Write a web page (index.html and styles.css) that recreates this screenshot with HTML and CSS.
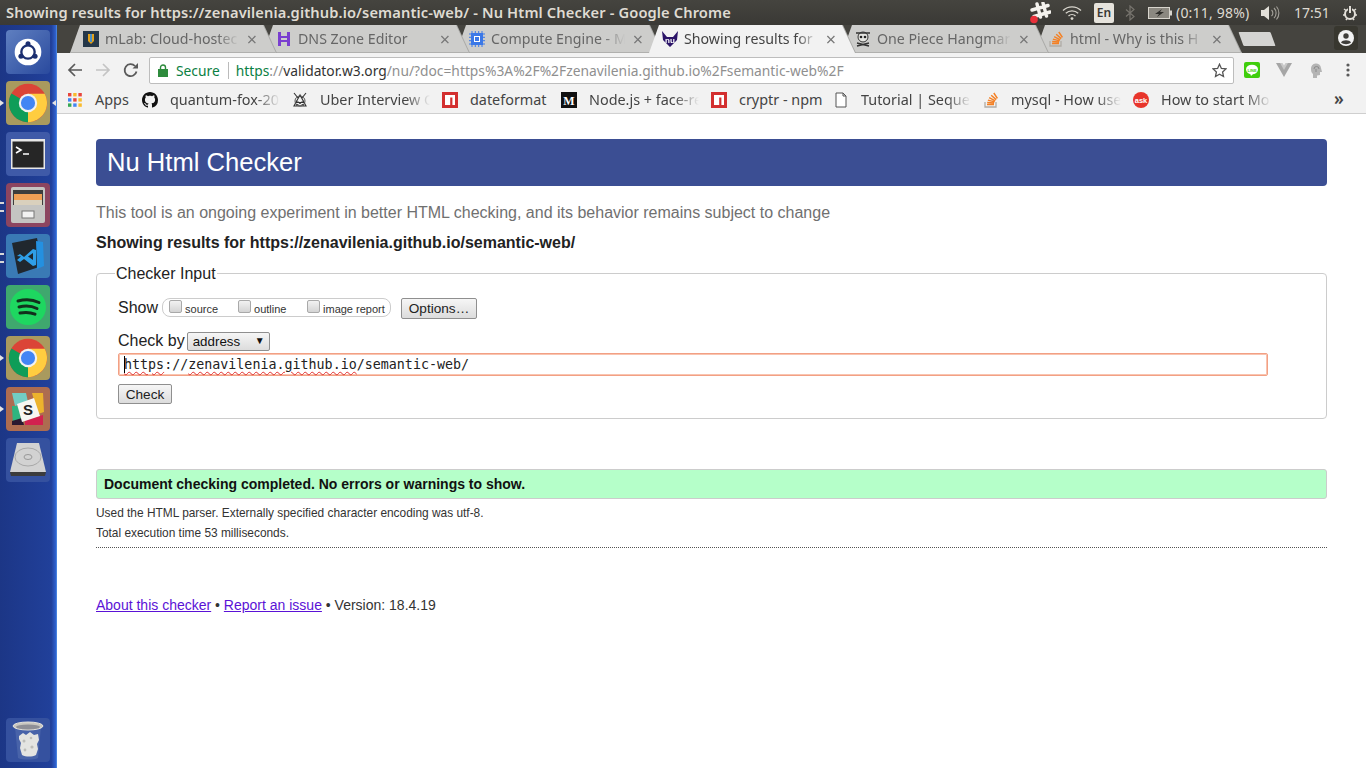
FILE: index.html
```html
<!DOCTYPE html>
<html lang="en">
<head>
<meta charset="utf-8">
<title>Showing results for https://zenavilenia.github.io/semantic-web/ - Nu Html Checker</title>
<link rel="stylesheet" href="styles.css">
</head>
<body>
<svg class="defs" width="0" height="0" aria-hidden="true">
  <symbol id="chrome" viewBox="0 0 48 48">
    <circle cx="24" cy="24" r="23" fill="#db4437"/>
    <path d="M24 24 L4.1 12.5 A23 23 0 0 0 24 47 Z" fill="#0f9d58"/>
    <path d="M24 13 H44 A23 23 0 0 1 24 47 L24 24 Z" fill="#ffcd40"/>
    <circle cx="24" cy="24" r="11" fill="#f1f1f1"/>
    <circle cx="24" cy="24" r="8.5" fill="#4285f4"/>
  </symbol>
  <symbol id="so" viewBox="0 0 16 16">
    <path d="M2 10v5h11v-5" fill="none" stroke="#b0aca6" stroke-width="1.3"/>
    <path d="M4 12.6h7M4.2 10.4l6.9.7M4.9 8.1l6.7 1.8M6.2 5.6l6 3.2M8.2 3.2l5 4.4M10.8 1l3.6 5.3" fill="none" stroke="#f48024" stroke-width="1.5"/>
  </symbol>
  <symbol id="npm" viewBox="0 0 16 16">
    <rect width="16" height="16" fill="#d32f2f"/>
    <path d="M3 3h10v10h-2.6V5.6H8.2V13H3z" fill="#fff"/>
  </symbol>
</svg>

<header class="topbar">
  <div class="win-title">Showing results for https://zenavilenia.github.io/semantic-web/ - Nu Html Checker - Google Chrome</div>
  <div class="indicators">
    <svg class="ind-slack" width="22" height="22" viewBox="0 0 22 22">
      <path d="M8 2l3.500 13M14 1l3.500 13M3 8l16-4.500M5 14.500l16-4.500" fill="none" stroke="#f4f2ee" stroke-width="3.400" stroke-linecap="round"/>
      <circle cx="5" cy="17.500" r="3.800" fill="#e8303a"/>
    </svg>
    <svg class="ind-wifi" width="20" height="16" viewBox="0 0 20 16">
      <path d="M1 5.500a13 13 0 0 1 18 0M3.800 8.300a9 9 0 0 1 12.400 0M6.500 11a5 5 0 0 1 7 0" fill="none" stroke="#d8d5cd" stroke-width="1.300"/>
      <circle cx="10" cy="13.600" r="1.400" fill="#d8d5cd"/>
    </svg>
    <span class="ind-lang">En</span>
    <svg class="ind-bt" width="10" height="16" viewBox="0 0 10 16">
      <path d="M1 4.500l8 7-4 3.500V1l4 3.500-8 7" fill="none" stroke="#77746e" stroke-width="1.200"/>
    </svg>
    <svg class="ind-bat" width="24" height="12" viewBox="0 0 24 12">
      <rect x=".5" y=".5" width="21" height="11" fill="#8b8880" stroke="#d8d5cd"/>
      <rect x="22" y="3.500" width="2" height="5" fill="#d8d5cd"/>
      <path d="M14 2L7 7h4l-2 3 7-5h-4z" fill="#2f2e2a"/>
    </svg>
    <span class="ind-text ind-pct">(0:11, 98%)</span>
    <svg class="ind-vol" width="20" height="16" viewBox="0 0 20 16">
      <path d="M1 5h3l5-4v14l-5-4H1z" fill="#e2dfd8"/>
      <path d="M11.500 5a4 4 0 0 1 0 6M14 3a7 7 0 0 1 0 10M16.500 1.500a10 10 0 0 1 0 13" fill="none" stroke="#a5a29b" stroke-width="1.100"/>
    </svg>
    <span class="ind-text ind-clock">17:51</span>
    <svg class="ind-power" width="16" height="16" viewBox="0 0 16 16">
      <circle cx="8" cy="9" r="5" fill="none" stroke="#e2dfd8" stroke-width="2"/>
      <path d="M8 1v7" stroke="#3f3e3a" stroke-width="4"/>
      <path d="M8 1v7" stroke="#e2dfd8" stroke-width="2"/>
      <path d="M2 4l2 1.500M14 4l-2 1.500M1 10h2M13 10h2M4 15l1-1.500M12 15l-1-1.500" stroke="#e2dfd8" stroke-width="1.500"/>
    </svg>
  </div>
</header>

<div class="desktop">
  <nav class="dock">
    <div class="dock-item tile-ubuntu">
      <svg width="30" height="30" viewBox="0 0 36 36">
        <circle cx="18" cy="18" r="16" fill="#fff"/>
        <circle cx="18" cy="18" r="8" fill="none" stroke="#1c2f70" stroke-width="2.800"/>
        <circle cx="18" cy="8" r="3" fill="#1c2f70"/>
        <circle cx="9.500" cy="23" r="3" fill="#1c2f70"/>
        <circle cx="26.500" cy="23" r="3" fill="#1c2f70"/>
      </svg>
    </div>
    <div class="dock-item tile-chrome pip-both"><svg width="40" height="40"><use href="#chrome"/></svg></div>
    <div class="dock-item tile-term">
      <svg width="34" height="30" viewBox="0 0 34 30">
        <rect width="34" height="30" fill="#e8e8e8"/>
        <rect x="1.500" y="2.500" width="31" height="26" fill="#262626"/>
        <path d="M5 8l5 3-5 3" fill="none" stroke="#fff" stroke-width="1.600"/>
        <path d="M12 15h6" stroke="#fff" stroke-width="1.500"/>
      </svg>
    </div>
    <div class="dock-item tile-files pip-dots">
      <svg width="34" height="36" viewBox="0 0 34 36">
        <rect width="34" height="36" rx="2" fill="#c4c4c2"/>
        <rect x="2" y="3" width="30" height="15" fill="#3d3d3d"/>
        <rect x="3" y="7" width="28" height="6" fill="#ef9f55"/>
        <rect x="3" y="13" width="28" height="5" fill="#d9d0bd"/>
        <rect x="11" y="24" width="12" height="7" fill="#f2f2f2" stroke="#777"/>
      </svg>
    </div>
    <div class="dock-item tile-code pip-dots">
      <svg width="34" height="36" viewBox="0 0 34 36">
        <path d="M1 5L26 0l5 28L7 36z" fill="#20272e"/>
        <path d="M25 3l7 1 1 24-7 3z" fill="#2490e0"/>
        <path d="M6 18l3-2 4 3 9-8 3 1v15l-3 1-9-7-4 3-3-2 4-3.500zM22 15l-5 3.500 5 3.500z" fill="#2f9fe8"/>
      </svg>
    </div>
    <div class="dock-item tile-spotify">
      <svg width="38" height="38" viewBox="0 0 38 38">
        <circle cx="19" cy="19" r="18" fill="#1ed760"/>
        <path d="M9 13c7-2 14-2 21 1.500M10 19c6-1.500 12-1.500 18 1.500M11 25c5-1 10-1 15 1.200" fill="none" stroke="#12301c" stroke-width="3" stroke-linecap="round"/>
      </svg>
    </div>
    <div class="dock-item tile-chrome2 pip-left"><svg width="40" height="40"><use href="#chrome"/></svg></div>
    <div class="dock-item tile-slack pip-left">
      <svg width="32" height="32" viewBox="0 0 32 32">
        <path d="M0 0h14l2 9-13 4z" fill="#72cdc4"/>
        <path d="M20 0h11l1 19-6 2z" fill="#ecb32d"/>
        <path d="M0 13h7l3 19H1z" fill="#2fb57f"/>
        <path d="M13 27l18-5v10H13z" fill="#d2224f"/>
        <path d="M0 28l10-3 2 7H0z" fill="#2a1830"/>
        <path d="M5 11L22 5l6 18-18 6z" fill="#f7f6f2"/>
        <text x="16" y="22" class="slack-s">S</text>
      </svg>
    </div>
    <div class="dock-item tile-hdd">
      <svg width="38" height="36" viewBox="0 0 38 36">
        <path d="M8 1h22l7 29H1z" fill="#d2d2d2"/>
        <ellipse cx="19" cy="15" rx="13" ry="9" fill="none" stroke="#a8a8a8"/>
        <ellipse cx="19" cy="15" rx="4" ry="2.500" fill="none" stroke="#999"/>
        <path d="M1 30h36l-1 4H2z" fill="#3c3c3c"/>
      </svg>
    </div>
    <div class="dock-item tile-trash">
      <svg width="32" height="42" viewBox="0 0 32 42">
        <path d="M3 8l3 31c4 2 16 2 20 0l3-31" fill="#5f7bb5" opacity=".45"/>
        <g fill="#e4e4e1">
          <path d="M7 17l4-3 3 2 4-3 4 3 4-1 1 6-2 4 1 5-2 6c-4 2-10 2-14 0l-2-7 1-5-2-4z"/>
        </g>
        <g fill="#bdbdb9">
          <circle cx="12" cy="22" r="1.500"/><circle cx="19" cy="19" r="1.300"/><circle cx="20" cy="28" r="1.600"/><circle cx="13" cy="31" r="1.400"/>
        </g>
        <ellipse cx="16" cy="7" rx="15" ry="4" fill="#c9c7c0" stroke="#e4e2dc"/>
        <ellipse cx="16" cy="8" rx="12" ry="2.500" fill="#8e8f96"/>
      </svg>
    </div>
  </nav>

  <div class="browser">
    <div class="tabstrip">
      <div class="tabs">
        <div class="tab"><div class="tab-shape">
          <svg class="fav" width="16" height="16" viewBox="0 0 16 16"><rect width="16" height="16" fill="#25384a"/><path d="M5 3h6v7l-3 3-3-3z" fill="#e3a21a"/><path d="M7 3h2v8H7z" fill="#4a90c8"/></svg>
          <span class="tab-title">mLab: Cloud-hostec</span><span class="tab-x">×</span>
        </div></div>
        <div class="tab"><div class="tab-shape">
          <svg class="fav" width="16" height="16" viewBox="0 0 16 16"><path d="M2 1h3v4h6V1h3v14h-3v-4H5v4H2zM5 7v2h6V7z" fill="#7a3fd0"/></svg>
          <span class="tab-title">DNS Zone Editor</span><span class="tab-x">×</span>
        </div></div>
        <div class="tab"><div class="tab-shape">
          <svg class="fav" width="16" height="16" viewBox="0 0 16 16"><path d="M3 0v16M6.300 0v16M9.700 0v16M13 0v16M0 3h16M0 6.300h16M0 9.700h16M0 13h16" stroke="#3b78e7" stroke-width="1"/><rect x="2" y="2" width="12" height="12" fill="#3b78e7"/><rect x="5" y="5" width="6" height="6" fill="#fff"/><rect x="6" y="6" width="4" height="4" fill="#3b78e7"/></svg>
          <span class="tab-title">Compute Engine - M</span><span class="tab-x">×</span>
        </div></div>
        <div class="tab tab-active"><div class="tab-shape">
          <svg class="fav" width="16" height="16" viewBox="0 0 16 16"><path d="M0 0l5 6h6l5-6-1 9-7 7-7-7z" fill="#2b1468"/><text x="8" y="12" class="fav-nu">nu</text></svg>
          <span class="tab-title">Showing results for</span><span class="tab-x">×</span>
        </div></div>
        <div class="tab"><div class="tab-shape">
          <svg class="fav" width="16" height="16" viewBox="0 0 16 16"><circle cx="8" cy="6" r="5" fill="#e4e4e0" stroke="#333"/><path d="M1 2h14M2 12l12 3M14 12L2 15" stroke="#333" stroke-width="1.400"/><circle cx="6" cy="6" r="1.300" fill="#222"/><circle cx="10" cy="6" r="1.300" fill="#222"/></svg>
          <span class="tab-title">One Piece Hangmar</span><span class="tab-x">×</span>
        </div></div>
        <div class="tab"><div class="tab-shape">
          <svg class="fav" width="16" height="16"><use href="#so"/></svg>
          <span class="tab-title">html - Why is this H</span><span class="tab-x">×</span>
        </div></div>
        <div class="newtab"></div>
      </div>
      <div class="profile">
        <svg width="16" height="16" viewBox="0 0 16 16"><circle cx="8" cy="8" r="8" fill="#f2f2f2"/><circle cx="8" cy="6" r="2.700" fill="#3f3e3a"/><path d="M3 12.500c1.500-3 8.500-3 10 0-2.500 2.300-7.500 2.300-10 0z" fill="#3f3e3a"/></svg>
      </div>
    </div>

    <div class="toolbar">
      <svg class="tool-btn" width="16" height="16" viewBox="0 0 16 16"><path d="M15 8H2M8 2L2 8l6 6" fill="none" stroke="#5a5a5a" stroke-width="1.700"/></svg>
      <svg class="tool-btn" width="16" height="16" viewBox="0 0 16 16"><path d="M1 8h13M8 2l6 6-6 6" fill="none" stroke="#c4c4c4" stroke-width="1.700"/></svg>
      <svg class="tool-btn" width="16" height="16" viewBox="0 0 16 16"><path d="M13.500 9.500A6 6 0 1 1 12 4" fill="none" stroke="#5a5a5a" stroke-width="1.800"/><path d="M9.500 6.500H15V1z" fill="#5a5a5a"/></svg>
      <div class="omnibox">
        <svg class="lock" width="10" height="13" viewBox="0 0 10 13"><path d="M2.500 5V3.500a2.500 2.500 0 0 1 5 0V5" fill="none" stroke="#2e8b3d" stroke-width="1.400"/><rect y="5" width="10" height="8" fill="#2e8b3d"/></svg>
        <span class="secure">Secure</span>
        <span class="omni-sep"></span>
        <span class="url"><span class="url-scheme">https</span><span class="url-dim">://</span><span class="url-host">validator.w3.org</span><span class="url-dim">/nu/?doc=https%3A%2F%2Fzenavilenia.github.io%2Fsemantic-web%2F</span></span>
        <svg class="star" width="15" height="15" viewBox="0 0 15 15"><path d="M7.500 1.200l1.900 4.200 4.600.5-3.400 3.100.9 4.500-4-2.300-4 2.300.9-4.500L1 5.900l4.600-.5z" fill="none" stroke="#555" stroke-width="1.300"/></svg>
      </div>
      <div class="extensions">
        <svg width="16" height="16" viewBox="0 0 16 16"><rect width="16" height="16" rx="2" fill="#3fce0c"/><ellipse cx="8" cy="7.500" rx="6" ry="4.800" fill="#fff"/><path d="M6 11h4l-3 3z" fill="#fff"/><text x="8" y="9.500" class="ext-line">LINE</text></svg>
        <svg width="16" height="14" viewBox="0 0 16 14"><path d="M0 0h5l3 5 3-5h5L8 14z" fill="#a6a6a6"/><path d="M4 0h2.500L8 2.600 9.500 0H12L8 7z" fill="#c8c8c8"/></svg>
        <svg width="16" height="16" viewBox="0 0 16 16"><path d="M3 7a5 5 0 0 1 10-1l1 4h-2v3l-3 .500V16H5v-4C3.500 11 3 9 3 7z" fill="#b4b4b4"/><path d="M6 7a2.500 2.500 0 0 1 5 0M8 7v3" fill="none" stroke="#8a8a8a"/></svg>
        <svg class="ext-menu" width="4" height="14" viewBox="0 0 4 14"><circle cx="2" cy="2" r="1.600" fill="#5a5a5a"/><circle cx="2" cy="7" r="1.600" fill="#5a5a5a"/><circle cx="2" cy="12" r="1.600" fill="#5a5a5a"/></svg>
      </div>
    </div>

    <div class="bookmarks">
      <div class="bm bm-apps">
        <svg width="14" height="14" viewBox="0 0 14 14">
          <rect width="3.400" height="3.400" fill="#e8453c"/><rect x="5.200" width="3.400" height="3.400" fill="#f9bb2d"/><rect x="10.400" width="3.400" height="3.400" fill="#e8453c"/>
          <rect y="5.200" width="3.400" height="3.400" fill="#4285f4"/><rect x="5.200" y="5.200" width="3.400" height="3.400" fill="#e8453c"/><rect x="10.400" y="5.200" width="3.400" height="3.400" fill="#f9bb2d"/>
          <rect y="10.400" width="3.400" height="3.400" fill="#34a853"/><rect x="5.200" y="10.400" width="3.400" height="3.400" fill="#4285f4"/><rect x="10.400" y="10.400" width="3.400" height="3.400" fill="#f9bb2d"/>
        </svg>
        <span class="bm-plain bm-t35">Apps</span>
      </div>
      <div class="bm">
        <svg width="16" height="16" viewBox="0 0 16 16"><path fill="#111" d="M8 0C3.580 0 0 3.580 0 8c0 3.540 2.290 6.530 5.470 7.590.4.070.55-.17.550-.38 0-.19-.01-.82-.01-1.490-2.010.37-2.530-.49-2.690-.94-.09-.23-.48-.94-.82-1.130-.28-.15-.68-.52-.01-.53.630-.01 1.080.58 1.230.82.720 1.210 1.870.87 2.330.66.070-.52.280-.87.510-1.070-1.780-.2-3.640-.89-3.640-3.950 0-.87.310-1.590.820-2.150-.08-.2-.36-1.020.08-2.120 0 0 .67-.21 2.200.82.640-.18 1.320-.27 2-.27s1.360.09 2 .27c1.530-1.040 2.200-.82 2.200-.82.440 1.100.16 1.920.08 2.120.51.560.82 1.270.82 2.150 0 3.070-1.870 3.750-3.650 3.950.29.250.54.730.54 1.480 0 1.070-.01 1.930-.01 2.200 0 .21.150.46.550.38A8.013 8.013 0 0 0 16 8c0-4.420-3.580-8-8-8z"/></svg>
        <span class="bm-fade">quantum-fox-20</span>
      </div>
      <div class="bm">
        <svg width="16" height="16" viewBox="0 0 16 16"><path d="M2 1l4 5M14 1l-4 5M8 3L2 14h12zM4 9l8 4M12 9l-8 4" fill="none" stroke="#333" stroke-width="1.100"/><circle cx="8" cy="9" r="5" fill="none" stroke="#555"/></svg>
        <span class="bm-fade">Uber Interview Q</span>
      </div>
      <div class="bm"><svg width="16" height="16"><use href="#npm"/></svg><span class="bm-plain bm-t79">dateformat</span></div>
      <div class="bm">
        <svg width="16" height="16" viewBox="0 0 16 16"><rect width="16" height="16" fill="#111"/><text x="8" y="12.500" class="fav-m">M</text></svg>
        <span class="bm-fade">Node.js + face-re</span>
      </div>
      <div class="bm"><svg width="16" height="16"><use href="#npm"/></svg><span class="bm-plain bm-t82">cryptr - npm</span></div>
      <div class="bm">
        <svg width="16" height="16" viewBox="0 0 16 16"><path d="M3 1h7l3 3v11H3zM10 1v3h3" fill="#fff" stroke="#555"/></svg>
        <span class="bm-fade">Tutorial | Sequel</span>
      </div>
      <div class="bm"><svg width="16" height="16"><use href="#so"/></svg><span class="bm-fade">mysql - How use</span></div>
      <div class="bm">
        <svg width="16" height="16" viewBox="0 0 16 16"><circle cx="8" cy="8" r="8" fill="#e8352b"/><text x="8" y="10.500" class="fav-ask">ask</text></svg>
        <span class="bm-fade">How to start Mo</span>
      </div>
      <span class="bm-more">»</span>
    </div>

    <main class="page">
      <h1 class="page-title">Nu Html Checker</h1>
      <p class="tagline">This tool is an ongoing experiment in better HTML checking, and its behavior remains subject to change</p>
      <p class="showing">Showing results for https://zenavilenia.github.io/semantic-web/</p>
      <fieldset class="checker">
        <legend>Checker Input</legend>
        <div class="show-row">
          <span>Show</span>
          <span class="show-group">
            <label class="opt opt-source"><input type="checkbox"><span>source</span></label>
            <label class="opt opt-outline"><input type="checkbox"><span>outline</span></label>
            <label class="opt"><input type="checkbox"><span>image report</span></label>
          </span>
          <button class="btn btn-options" type="button">Options…</button>
        </div>
        <div class="by-row">
          <span>Check by</span>
          <span class="select-wrap"><select class="by-select"><option>address</option></select></span>
        </div>
        <div class="url-field"><span class="caret"></span><span class="typo">https</span>://<span class="typo">zenavilenia.github.io</span>/semantic-web/</div>
        <button class="btn btn-check" type="button">Check</button>
      </fieldset>
      <div class="success">Document checking completed. No errors or warnings to show.</div>
      <p class="detail">Used the HTML parser. Externally specified character encoding was utf-8.</p>
      <p class="detail detail-last">Total execution time 53 milliseconds.</p>
      <footer class="page-foot"><a href="#about">About this checker</a> • <a href="#issue">Report an issue</a> • Version: 18.4.19</footer>
    </main>
  </div>
</div>
</body>
</html>
```
FILE: styles.css
```css
* { box-sizing: border-box; }
html, body { margin: 0; height: 100%; overflow: hidden; }
body { display: flex; flex-direction: column; width: 1366px; height: 768px; font-family: "Liberation Sans", Arial, sans-serif; background: #fff; color: #222; }
.defs { display: block; height: 0; }

.topbar { flex: 0 0 25px; height: 25px; display: flex; align-items: center; justify-content: space-between; padding-left: 6px; background: linear-gradient(#45443f, #3a3935); color: #dfdbd2; font-family: "Noto Sans", sans-serif; }
.win-title { margin-bottom: 2px; font-size: 14.670px; font-weight: 600; letter-spacing: .12px; white-space: nowrap; }
.indicators { display: flex; align-items: center; height: 25px; }
.ind-slack { margin-right: 11px; }
.ind-wifi { margin-right: 12px; }
.ind-lang { width: 20px; height: 20px; margin-right: 11px; background: #e6e3dc; color: #3a3935; border-radius: 2px; font-size: 12px; font-weight: 600; text-align: center; line-height: 20px; }
.ind-bt { margin-right: 13px; }
.ind-bat { margin-right: 4px; }
.ind-text { font-size: 14px; color: #dfdbd2; white-space: nowrap; letter-spacing: .2px; }
.ind-pct { width: 74px; margin-right: 10px; }
.ind-vol { margin-right: 14px; }
.ind-clock { width: 38px; margin-right: 10px; letter-spacing: 0; }
.ind-power { margin-right: 8px; }

.desktop { flex: 1; display: flex; min-height: 0; }
.dock { flex: 0 0 57px; display: flex; flex-direction: column; gap: 7px; padding: 5px 0 6px 6px; background: linear-gradient(90deg, #1c3686 0, #21409a 90%, #2f62d0 98%, #5a9ae8 100%); }
.dock-item { position: relative; width: 44px; height: 44px; flex: none; border-radius: 4px; display: flex; align-items: center; justify-content: center; }
.tile-ubuntu { background: linear-gradient(135deg, #5f7fc0, #2a4a9e); }
.tile-chrome, .tile-chrome2 { background: #a99a5e; }
.tile-term { background: #3f5aa8; }
.tile-files { background: #8c4560; }
.tile-code { background: #3a7ab5; }
.tile-spotify { background: #3fa86e; }
.tile-slack { background: #ad6c50; }
.tile-hdd { background: #35519f; }
.tile-trash { margin-top: auto; background: #35519f; }
.slack-s { font: 700 15px "Liberation Sans", sans-serif; fill: #222; text-anchor: middle; }
.pip-left::before, .pip-both::before { content: ""; position: absolute; left: -6px; top: 19px; border-left: 4px solid #e4e4e4; border-top: 3.5px solid transparent; border-bottom: 3.5px solid transparent; }
.pip-both::after { content: ""; position: absolute; right: -6px; top: 19px; border-right: 4px solid #e4e4e4; border-top: 3.5px solid transparent; border-bottom: 3.5px solid transparent; }
.pip-dots::before { content: ""; position: absolute; left: -6px; top: 19px; width: 4px; height: 6px; border-top: 2px solid #d8d8d8; border-bottom: 2px solid #d8d8d8; }

.browser { flex: 1; min-width: 0; display: flex; flex-direction: column; background: #fff; }
.tabstrip { flex: 0 0 28px; display: flex; justify-content: space-between; background: #45443f; padding-left: 13px; }
.tabs { display: flex; }
.tab { width: 206px; margin-right: -13px; height: 28px; filter: drop-shadow(1px 0 0 #a8a8a6); position: relative; }
.tab:nth-child(1) { z-index: 6; } .tab:nth-child(2) { z-index: 5; } .tab:nth-child(3) { z-index: 4; } .tab:nth-child(5) { z-index: 3; } .tab:nth-child(6) { z-index: 2; }
.tab-active { z-index: 9; }
.tab-shape { height: 28px; display: flex; align-items: center; padding: 0 17px 0 13px; background: #cdcdcb; clip-path: polygon(10px 0, 193px 0, 206px 100%, 0 100%); box-shadow: inset 0 -1px #b0b0ae; font-family: "Noto Sans", sans-serif; }
.tab-active .tab-shape { background: #f2f2f2; box-shadow: none; }
.fav { flex: none; }
.tab-title { flex: 1; min-width: 0; margin: 0 0 2px 6px; font-size: 14.200px; color: #666; white-space: nowrap; -webkit-mask-image: linear-gradient(90deg, #000 84%, transparent); mask-image: linear-gradient(90deg, #000 84%, transparent); }
.tab-title-full { -webkit-mask-image: none; mask-image: none; }
.tab-active .tab-title { color: #444; }
.tab-x { flex: none; width: 14px; margin-left: 6px; font-size: 18px; line-height: 18px; color: #777; text-align: center; }
.newtab { width: 32px; height: 14px; margin: 7px 0 0 13px; background: #d4d4d2; transform: skewX(20deg); border-radius: 1px; z-index: 1; }
.profile { width: 24px; height: 24px; margin: 1px 8px 0 0; border-radius: 3px; background: #38372f; display: flex; align-items: center; justify-content: center; }
.fav-nu { font: 700 8px "Liberation Sans", sans-serif; fill: #fff; text-anchor: middle; }
.fav-m { font: 700 12px "Liberation Serif", serif; fill: #fff; text-anchor: middle; }
.fav-ask { font: 700 7.500px "Liberation Sans", sans-serif; fill: #fff; text-anchor: middle; }
.ext-line { font: 700 4px "Liberation Sans", sans-serif; fill: #3fce0c; text-anchor: middle; }

.toolbar { flex: 0 0 34px; display: flex; align-items: center; background: #f2f2f2; padding-left: 10px; gap: 12px; font-family: "Noto Sans", sans-serif; }
.omnibox { width: 1085px; height: 27px; margin-left: -2px; display: flex; align-items: center; padding: 0 6px 0 8px; background: #fff; border: 1px solid #bdbdbd; border-radius: 2px; font-size: 13.800px; white-space: nowrap; }
.lock { flex: none; }
.secure { margin-left: 8px; color: #0b8043; }
.omni-sep { width: 1px; height: 17px; margin: 0 7px 0 8px; background: #bbb; }
.url { flex: 1; min-width: 0; overflow: hidden; }
.url-scheme { color: #0b8043; }
.url-dim { color: #8f8f8f; }
.url-host { color: #333; }
.star { flex: none; }
.extensions { display: flex; align-items: center; gap: 16px; margin-left: -2px; }
.ext-menu { margin-left: 6px; }

.bookmarks { flex: 0 0 27px; display: flex; align-items: center; gap: 12px; padding-left: 11px; background: #f2f2f2; border-bottom: 1px solid #cfcfcf; font-family: "Noto Sans", sans-serif; font-size: 14.400px; color: #444; white-space: nowrap; }
.bm { display: flex; align-items: center; gap: 12px; flex: none; }
.bm-apps { gap: 13px; }
.bm svg { flex: none; }
.bm-plain, .bm-fade { margin-bottom: 2px; }
.bm-t35 { width: 35px; }
.bm-t79 { width: 79px; }
.bm-t82 { width: 82px; }
.bm-fade { width: 110px; -webkit-mask-image: linear-gradient(90deg, #000 78%, transparent); mask-image: linear-gradient(90deg, #000 78%, transparent); }
.bm-more { margin-left: 51px; font-size: 17px; font-weight: 600; line-height: 20px; margin-bottom: 2px; }

.page { flex: 1; padding: 25px 39px 0; color: #222; font-size: 16px; }
.page-title { margin: 0; height: 47px; padding: 0 11px; background: #3b4e93; color: #fff; border-radius: 4px; font-size: 25.600px; font-weight: 400; line-height: 47px; }
.tagline { margin: 17px 0 0; color: #707070; line-height: 19px; }
.showing { margin: 11px 0 0; font-weight: 700; line-height: 19px; }
.checker { margin: 11px 0 0; height: 156px; padding: 15px 21px 0; border: 1px solid #ccc; border-radius: 4px; }
.checker legend { margin-left: -3px; padding: 2px 1px 0; line-height: 18px; }
.show-row { display: flex; align-items: center; height: 21px; margin-top: -1px; }
.show-group { display: flex; align-items: center; width: 229px; height: 19px; margin-left: 4px; padding-left: 6px; border: 1px solid #ccc; border-radius: 8px; font-size: 11px; color: #333; }
.opt { display: flex; align-items: center; }
.opt input { appearance: none; -webkit-appearance: none; flex: none; width: 13px; height: 13px; margin: 0 3px 3px 0; background: linear-gradient(#f2f2f2, #d4d4d4); border: 1px solid #a9a9a9; border-radius: 2px; }
.opt span { margin-top: 2px; }
.opt-source { width: 69px; }
.opt-outline { width: 69px; }
.btn { font: 13.600px "Liberation Sans", sans-serif; color: #222; background: linear-gradient(#f6f6f6, #dcdcdc); border: 1px solid #8f8f8f; border-radius: 2px; padding: 0; }
.btn-options { width: 76px; height: 21px; margin: 2px 0 0 10px; }
.by-row { display: flex; align-items: center; height: 19px; margin-top: 13px; }
.select-wrap { position: relative; display: block; margin: 2px 0 0 2px; }
.select-wrap::after { content: "▼"; position: absolute; right: 5px; top: 3px; font-size: 10px; color: #111; pointer-events: none; }
.by-select { appearance: none; -webkit-appearance: none; display: block; width: 83px; height: 19px; padding: 0 5px; font: 13.333px "Liberation Sans", sans-serif; color: #111; background: linear-gradient(#f6f6f6, #dcdcdc); border: 1px solid #8f8f8f; border-radius: 2px; }
.url-field { position: relative; width: 1150px; height: 23px; margin-top: 3px; padding-left: 5px; border: 1px solid #f2a084; box-shadow: inset 0 0 0 1px #f9c4b0; border-radius: 2px; background: #fff; font: 13.333px/21px "DejaVu Sans Mono", monospace; color: #222; white-space: nowrap; }
.caret { position: absolute; left: 5px; top: 2px; width: 1px; height: 17px; background: #000; }
.typo { text-decoration: underline wavy #e03030 1px; text-underline-offset: 2px; }
.btn-check { display: block; width: 54px; height: 20px; margin-top: 8px; }
.success { margin-top: 50px; height: 30px; padding-left: 7px; background: #b5ffc9; border: 1px solid #ccc; border-radius: 3px; font-size: 14px; font-weight: 700; line-height: 28px; color: #111; }
.detail { margin: 7px 0 0; font-size: 11.900px; line-height: 15px; color: #333; }
.detail + .detail { margin-top: 5px; }
.detail-last { padding-bottom: 6px; border-bottom: 1px dotted #555; }
.page-foot { margin-top: 49px; font-size: 14px; line-height: 17px; color: #333; }
.page-foot a { color: #5a12d6; }
```
